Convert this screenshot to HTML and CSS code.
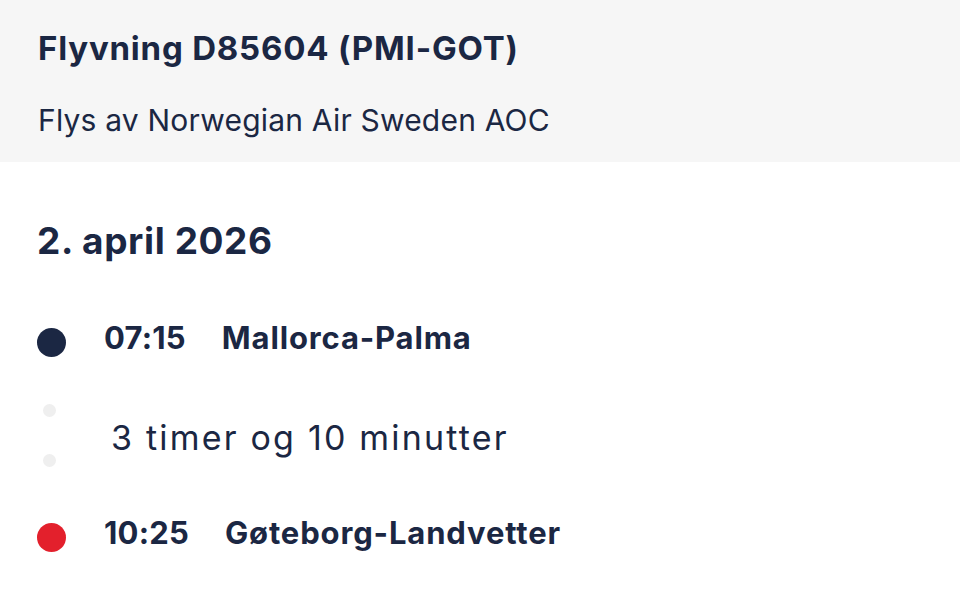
FILE: index.html
```html
<!DOCTYPE html>
<html lang="no">
<head>
<meta charset="utf-8">
<link rel="stylesheet" href="styles.css">
</head>
<body>
<header class="head">
  <h1 class="title">Flyvning D85604 (PMI-GOT)</h1>
  <p class="operator">Flys av Norwegian Air Sweden AOC</p>
</header>
<main class="content">
  <h2 class="date">2. april 2026</h2>
  <div class="stop">
    <span class="dot dot-dep"></span>
    <span class="time">07:15</span>
    <span class="place">Mallorca-Palma</span>
  </div>
  <div class="duration">
    <div class="dots"><span class="small"></span><span class="small"></span></div>
    <span class="dur-text">3 timer og 10 minutter</span>
  </div>
  <div class="stop">
    <span class="dot dot-arr"></span>
    <span class="time">10:25</span>
    <span class="place">Gøteborg-Landvetter</span>
  </div>
</main>
</body>
</html>
```
FILE: styles.css
```css
* { box-sizing: border-box; }
html, body { margin: 0; padding: 0; background: #ffffff; }
body {
  font-family: Inter, "Noto Sans", sans-serif;
  color: #1b2743;
  width: 960px;
  height: 606px;
  overflow: hidden;
}
.head {
  background: #f6f6f6;
  height: 162px;
  padding: 28px 38px 0;
}
.title {
  margin: 0;
  font-size: 33px;
  font-weight: 700;
  line-height: 40px;
  letter-spacing: 0.8px;
}
.operator {
  margin: 32px 0 0;
  font-size: 30px;
  font-weight: 400;
  line-height: 40px;
  letter-spacing: 0.2px;
}
.content {
  padding: 0 0 0 37px;
}
.date {
  margin: 55px 0 0;
  font-size: 37px;
  font-weight: 700;
  line-height: 48px;
  letter-spacing: 0.6px;
}
.stop {
  display: flex;
  align-items: center;
  height: 48px;
  margin-top: 48px;
  font-size: 31px;
  font-weight: 700;
}
.duration + .stop { margin-top: 0; }
.dot {
  width: 29px;
  height: 29px;
  border-radius: 50%;
  flex: none;
  margin: 10px 38px 0 0;
}
.dot-dep { background: #1b2743; }
.dot-arr { background: #e3202c; }
.time {
  margin-right: 36px;
  letter-spacing: 0.2px;
}
.place { letter-spacing: 0.85px; }
.duration {
  display: flex;
  align-items: flex-start;
  height: 147px;
}
.dots {
  display: flex;
  flex-direction: column;
  gap: 37px;
  margin: 43px 0 0 6px;
}
.small {
  width: 13px;
  height: 13px;
  border-radius: 50%;
  background: #efefef;
}
.dur-text {
  margin: 53px 0 0 55px;
  font-size: 34px;
  font-weight: 400;
  line-height: 48px;
  letter-spacing: 2.2px;
}
```
